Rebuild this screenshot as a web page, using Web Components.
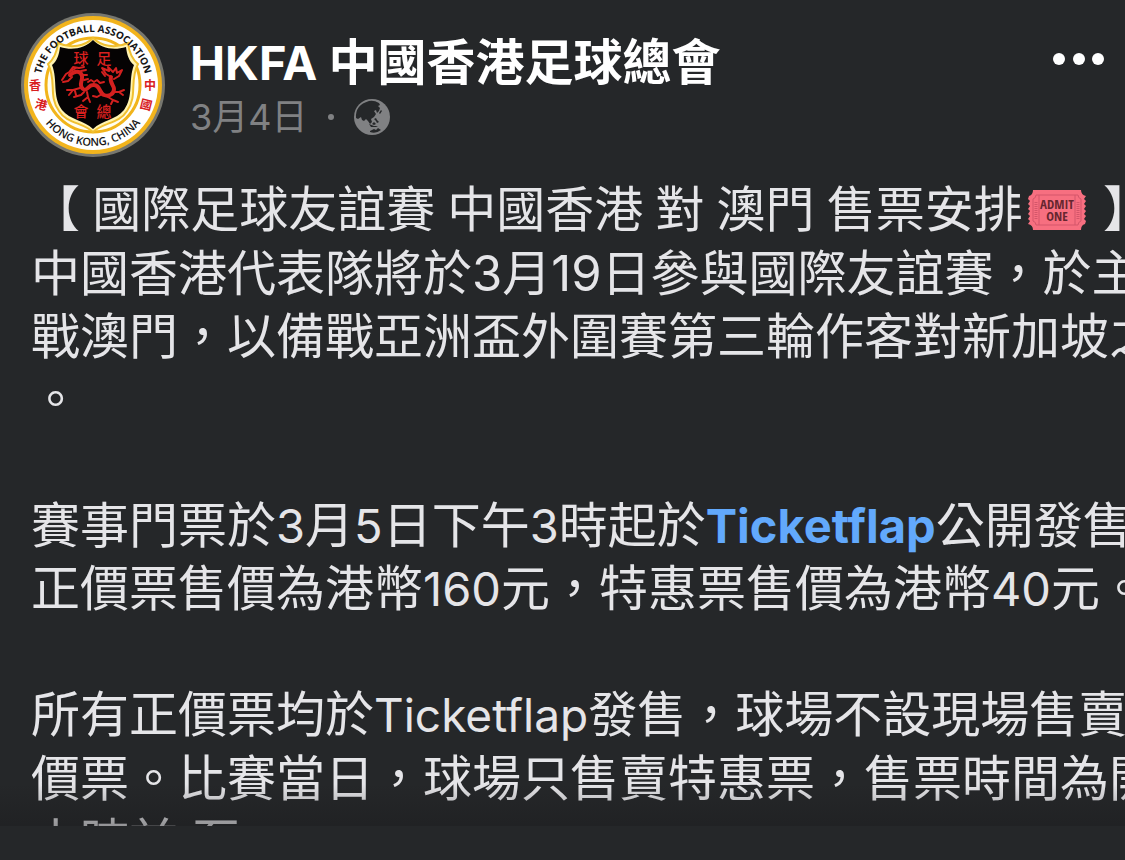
<!DOCTYPE html>
<html lang="zh-Hant">
<head>
<meta charset="utf-8">
<meta name="viewport" content="width=device-width, initial-scale=1">
<title>HKFA 中國香港足球總會</title>
<style>
  html, body {
    height: 100%;
  }

  body {
    margin: 0;
    overflow: hidden;
    background: #252729;
    color: #e5e5e8;
    font-family: Inter, "Noto Sans CJK TC", sans-serif;
  }
</style>
</head>
<body>
<post-card></post-card>

<script>
customElements.define('club-crest', class ClubCrest extends HTMLElement {
  constructor() {
    super()
    this.attachShadow({mode: 'open'})
    this.shadowRoot.innerHTML = this.template
  }

  get template() {
    return `
    <style>
      :host {
        display: block;
        flex: none;
        width: 144px;
        height: 144px;
      }

      svg {
        display: block;
        width: 100%;
        height: 100%;
      }

      .ring {
        font: 600 11px "Open Sans", sans-serif;
        fill: #161616;
        text-anchor: middle;
      }

      .ring.top {
        font-size: 10px;
        font-weight: 700;
      }

      .han {
        font: 700 12px "Noto Sans CJK TC", sans-serif;
        fill: #d8201f;
        text-anchor: middle;
      }

      .shield {
        font-size: 15px;
        font-weight: 500;
      }
    </style>
    <svg viewBox="-72 -72 144 144" role="img" aria-label="The Football Association of Hong Kong, China">
      <defs>
        <path id="top" d="M-53 0A53 53 0 0 1 53 0"></path>
        <path id="bottom" d="M-61 0A61 61 0 0 0 61 0"></path>
      </defs>
      <circle r="72" fill="#77776f"></circle>
      <circle r="69" fill="#f2b41c"></circle>
      <circle r="65" fill="#fff"></circle>
      <circle r="47" fill="#fffdf0" stroke="#f1b41b" stroke-width="3"></circle>
      <path d="M0-47C-8-39-22-36-35-42C-36-33-39-26-45-21C-36-4-45 11-34 26C-27 38-9 38 0 47C9 38 27 38 34 26C45 11 36-4 45-21C39-26 36-33 35-42C22-36 8-39 0-47Z" fill="#fff3b0" stroke="#f0c030" stroke-width="2"></path>
      <path d="M0-45C-8-37-20-34-33-38C-34-30-36-24-41-20C-35-5-41 11-31 25C-23 35-9 35 0 44C9 35 23 35 31 25C41 11 35-5 41-20C36-24 34-30 33-38C20-34 8-37 0-45Z" fill="#050303"></path>
      <g fill="none" stroke="#d3201f" stroke-linecap="round" stroke-linejoin="round">
        <path stroke-width="4" d="M-23-10C-18-15-12-14-11-9C-10-4-15 0-10 4C-6 7-5 0 0 0C7-1 6 8 11 10C16 12 21 9 21 4C21 0 16-3 18-8"></path>
        <path stroke-width="2" d="M-31-5L-27-11L-22-14L-17-17M-30-3L-25-4L-21-8M-23-14L-20-18L-14-17L-9-18M-12-14L-7-15M-11-10L-6-10M-9-5L-5-6M18-8L13-11L9-17L16-14L15-18L20-13L23-17L24-12L29-15L26-9L21-6M9-13L12-9M-13 3L-20 5L-26 5M-20 5L-24 10M-18 6L-17 10M-9 7L-12 10L-19 12M-6 7L-5 12L-10 16M-5 12L-3 17M-5-3L-2-5L1-3L4-5L7-2L11-3M9 9L4 12L0 11M15 12L20 15L18 19M20 15L25 17M21 7L26 7L30 10M26 7L31 5"></path>
      </g>
      <text class="ring top"><textPath href="#top" startOffset="50%">THE FOOTBALL ASSOCIATION</textPath></text>
      <text class="ring"><textPath href="#bottom" startOffset="50%">HONG KONG, CHINA</textPath></text>
      <text class="han" transform="translate(-58 5)">香</text>
      <text class="han" transform="translate(-53 24) rotate(14)">港</text>
      <text class="han" transform="translate(57 5)">中</text>
      <text class="han" transform="translate(52 24) rotate(14)">國</text>
      <text class="han shield" x="-12" y="-21">球</text>
      <text class="han shield" x="11" y="-21">足</text>
      <text class="han shield" x="-12" y="32">會</text>
      <text class="han shield" x="11" y="32">總</text>
    </svg>
    `
  }
})

customElements.define('globe-icon', class GlobeIcon extends HTMLElement {
  constructor() {
    super()
    this.attachShadow({mode: 'open'})
    this.shadowRoot.innerHTML = this.template
  }

  get template() {
    return `
    <style>
      :host {
        display: block;
        width: 36px;
        height: 36px;
      }

      svg {
        display: block;
      }
    </style>
    <svg width="36" height="36" viewBox="0 0 36 36" role="img" aria-label="公開">
      <circle cx="18" cy="18" r="18" fill="#808183"></circle>
      <path fill="#252729" d="M15 2Q20 1 25 4L26 6L24 7L26 9L25 12L23 14L22 11L20 12L22 15L20 18L17 20L18 23L16 25L14 22L12 20L10 22L8 21L7 18L4 20L2 19Q1 6 15 2Z"></path>
      <path fill="#252729" d="M20 20L22 19L23 21L25 23L23 24L22 22ZM15 25L20 27L24 27L22 28L17 28ZM20 23L22 25L20 26L18 25ZM25 14L27 11L28 12L26 15ZM16 32L20 30L22 31L24 29L27 31Q22 35 16 33Z"></path>
    </svg>
    `
  }
})

customElements.define('ticket-emoji', class TicketEmoji extends HTMLElement {
  constructor() {
    super()
    this.attachShadow({mode: 'open'})
    this.shadowRoot.innerHTML = this.template
  }

  get template() {
    return `
    <style>
      :host {
        display: inline-block;
        width: 60px;
        height: 42px;
        margin: 0 4px;
        vertical-align: -4px;
      }

      svg {
        display: block;
      }

      text {
        font: 700 13px "Liberation Sans Narrow", "Open Sans Condensed", "Roboto Condensed", Lato, sans-serif;
        fill: #66262f;
        text-anchor: middle;
      }
    </style>
    <svg width="60" height="42" viewBox="0 0 60 42" role="img" aria-label="入場券">
      <path fill="#f76f80" d="M6 1H54Q54 6 59 7L57 10L59 12L57 15L59 17L57 20L59 22L57 25L59 27L57 30L59 32L58 35Q54 36 54 41H6Q6 36 1 35L3 32L1 30L3 27L1 25L3 22L1 20L3 17L1 15L3 12L1 10L2 7Q6 6 6 1Z"></path>
      <path fill="none" stroke="#d4566a" d="M9 6H51Q51 9 54 10V32Q51 33 51 36H9Q9 33 6 32V10Q9 9 9 6ZM12 6V36M48 6V36"></path>
      <path fill="none" stroke="#d4566a" stroke-width="3" stroke-dasharray="1 1" d="M9 13V30M51 13V30"></path>
      <text x="30" y="20">ADMIT</text>
      <text x="30" y="32">ONE</text>
    </svg>
    `
  }
})

customElements.define('post-header', class PostHeader extends HTMLElement {
  constructor() {
    super()
    this.attachShadow({mode: 'open'})
    this.shadowRoot.innerHTML = this.template
  }

  get template() {
    return `
    <style>
      :host {
        display: flex;
        align-items: flex-start;
        gap: 25px;
        padding: 13px 16px 0 21px;
      }

      .info {
        flex: 1;
        padding-top: 20px;
      }

      h1 {
        margin: 0;
        color: #fff;
        font-size: 49px;
        line-height: 60px;
        font-weight: 700;
        white-space: nowrap;
      }

      .meta {
        display: flex;
        align-items: center;
        gap: 20px;
        color: #808183;
        font-size: 36px;
        line-height: 48px;
      }

      .dot {
        width: 6px;
        height: 6px;
        border-radius: 50%;
        background: #808183;
      }

      button {
        display: block;
        margin-top: 28px;
        padding: 0;
        border: 0;
        background: none;
        color: #fff;
        cursor: pointer;
      }

      button svg {
        display: block;
      }
    </style>
    <club-crest></club-crest>
    <div class="info">
      <h1><slot name="author"></slot></h1>
      <div class="meta">
        <slot name="date"></slot>
        <span class="dot"></span>
        <globe-icon></globe-icon>
      </div>
    </div>
    <button type="button" aria-label="更多">
      <svg width="60" height="36" viewBox="0 0 60 36" fill="currentColor">
        <circle cx="10" cy="18" r="6"></circle>
        <circle cx="30" cy="18" r="6"></circle>
        <circle cx="49" cy="18" r="6"></circle>
      </svg>
    </button>
    `
  }
})

customElements.define('post-text', class PostText extends HTMLElement {
  constructor() {
    super()
    this.attachShadow({mode: 'open'})
    this.shadowRoot.innerHTML = this.template
  }

  get template() {
    return `
    <style>
      :host {
        display: block;
        position: relative;
        flex: 1;
        min-height: 0;
        overflow: hidden;
        padding: 21px 0 0 31px;
        font-size: 49px;
        line-height: 63px;
        white-space: nowrap;
      }

      /* fade over the cut-off last line */
      :host::after {
        content: "";
        position: absolute;
        left: 0;
        right: 0;
        bottom: 0;
        height: 42px;
        background: linear-gradient(transparent, rgba(26, 26, 28, .4));
      }

      ::slotted(p) {
        margin: 0 0 63px;
      }
    </style>
    <slot></slot>
    `
  }
})

customElements.define('post-link', class PostLink extends HTMLElement {
  constructor() {
    super()
    this.attachShadow({mode: 'open'})
    this.shadowRoot.innerHTML = this.template
  }

  get template() {
    return `<style>
      :host {
        display: inline;
      }

      a {
        color: #62a9fc;
        font-size: 47px;
        font-weight: 700;
        text-decoration: none;
      }
    </style><a href="#"><slot></slot></a>`
  }
})

customElements.define('post-card', class PostCard extends HTMLElement {
  constructor() {
    super()
    this.attachShadow({mode: 'open'})
    this.shadowRoot.innerHTML = this.template
  }

  get template() {
    return `
    <style>
      :host {
        display: flex;
        flex-direction: column;
        height: 100vh;
        box-sizing: border-box;
        padding-bottom: 34px;
      }

      .latin {
        font-size: 47px;
      }

      .brand {
        font-size: 46px;
      }

      .title {
        font-family: Roboto, "Noto Sans CJK TC", sans-serif;
      }
    </style>
    <post-header>
      <span slot="author"><span class="latin">HKFA </span>中國香港足球總會</span>
      <time slot="date" datetime="03-04">3月4日</time>
    </post-header>
    <post-text>
      <p>
        <span class="title">【 國際足球友誼賽 中國香港 對 澳門 售票安排<ticket-emoji></ticket-emoji> 】</span><br>
        中國香港代表隊將於3月19日參與國際友誼賽，於主<br>
        戰澳門，以備戰亞洲盃外圍賽第三輪作客對新加坡之<br>
        。
      </p>
      <p>
        賽事門票於<span class="latin">3</span>月<span class="latin">5</span>日下午<span class="latin">3</span>時起於<post-link>Ticketflap</post-link>公開發售<br>
        正價票售價為港幣<span class="latin">160</span>元，特惠票售價為港幣<span class="latin">40</span>元。
      </p>
      <p>
        所有正價票均於<span class="brand">Ticketflap</span>發售，球場不設現場售賣<br>
        價票。比賽當日，球場只售賣特惠票，售票時間為開<br>
        小時前 至
      </p>
    </post-text>
    `
  }
})
</script>
</body>
</html>
